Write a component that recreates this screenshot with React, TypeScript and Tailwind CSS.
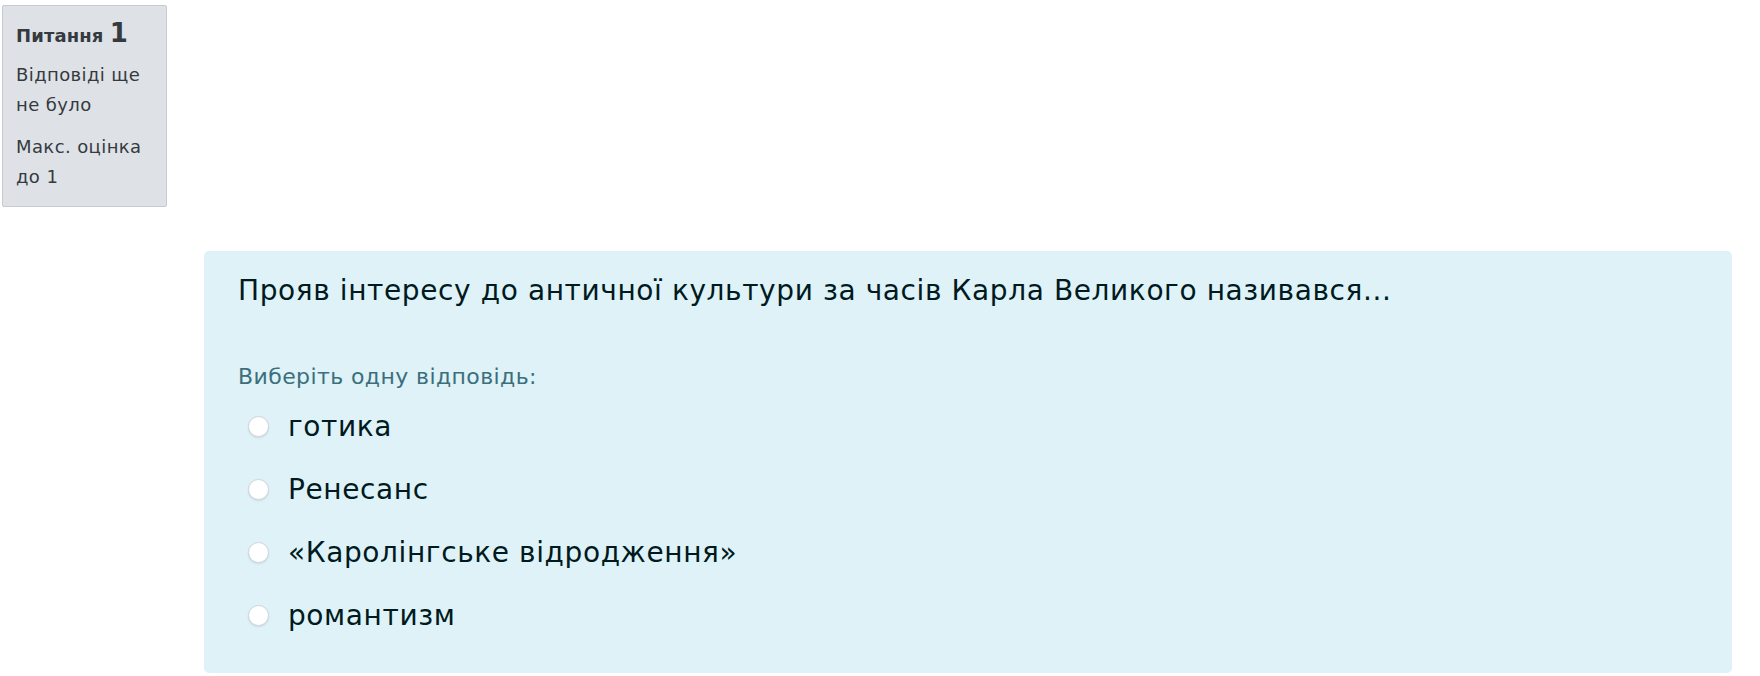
const options = ["готика", "Ренесанс", "«Каролінгське відродження»", "романтизм"];

export default function App() {
  return (
    <div className="min-h-[676px] bg-white pt-[5px] pl-[2px] pb-[3px] font-['DejaVu_Sans',sans-serif]">
      {/* question info */}
      <div className="w-[165px] h-[202px] bg-[#dee2e6] border border-[#c6cbd1] rounded-[2px] px-[13px] pt-[12px] text-[#343a40]">
        <h3 className="text-[18px] font-bold leading-[30px] tracking-[0.1px]">
          Питання <span className="text-[26px]">1</span>
        </h3>
        <div className="text-[18px] leading-[30px] mt-[9px] tracking-[0.4px]">Відповіді ще не було</div>
        <div className="text-[18px] leading-[30px] mt-[12px] tracking-[0.4px]">Макс. оцінка до 1</div>
      </div>

      {/* formulation */}
      <div className="mt-[44px] ml-[202px] mr-[28px] bg-[#def2f8] rounded-[5px] pl-[34px] pt-[22px] pb-[26px] text-[#001a1e]">
        <div className="text-[28px] leading-[36px] tracking-[0.6px]">
          Прояв інтересу до античної культури за часів Карла Великого називався...
        </div>
        <div className="mt-[54px] text-[22px] leading-[28px] tracking-[0.4px] text-[#3b6f7c]">
          Виберіть одну відповідь:
        </div>
        <div className="mt-[4px]">
          {options.map((o) => (
            <label key={o} className="h-[63px] flex items-center">
              <span className="ml-[10px] w-[21px] h-[21px] rounded-full bg-white border border-[#d0d5da] shadow-[0_1px_2px_rgba(0,0,0,0.1)]" />
              <span className="ml-[19px] text-[28px] leading-[36px] tracking-[0.6px]">{o}</span>
            </label>
          ))}
        </div>
      </div>
    </div>
  );
}
